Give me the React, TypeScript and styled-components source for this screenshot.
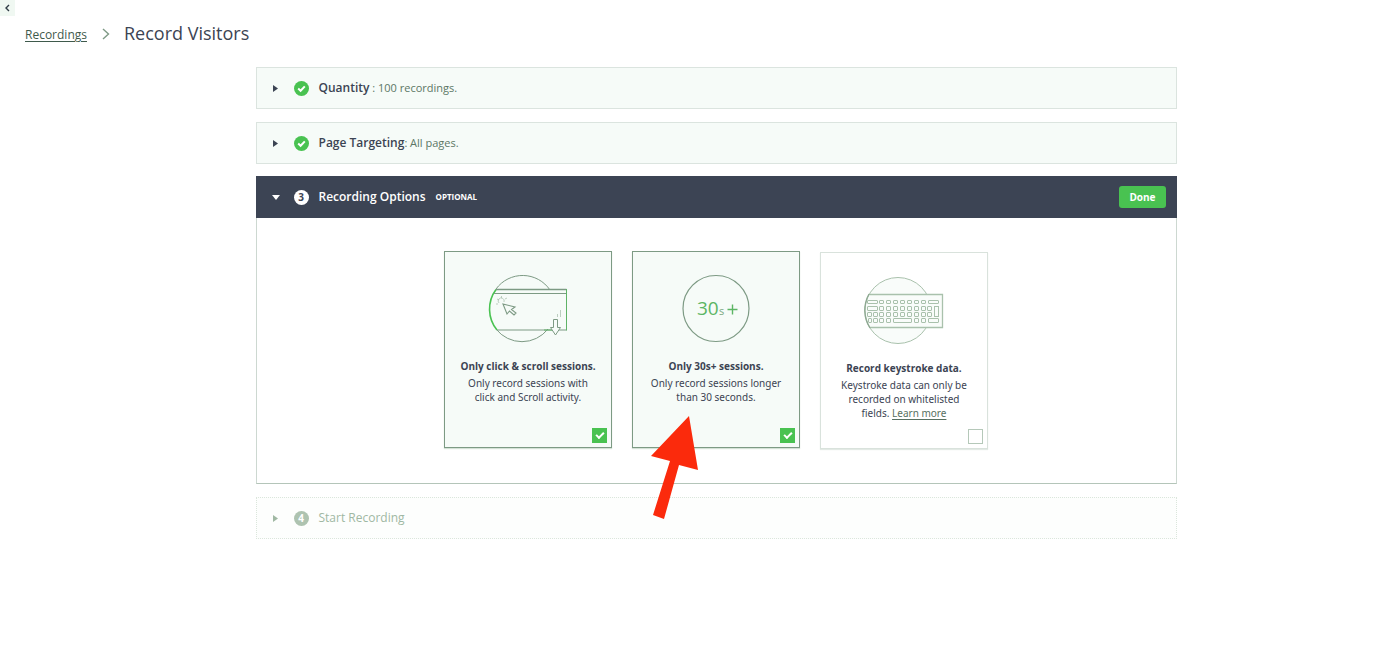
import React, { useState } from 'react';
import styled, { createGlobalStyle } from 'styled-components';

const GlobalStyle = createGlobalStyle`
  *, *::before, *::after { box-sizing: border-box; }
  body {
    margin: 0;
    background: #fff;
    color: #3c4453;
    font-family: 'Open Sans', 'Noto Sans', sans-serif;
    font-size: 12px;
  }
  h1, h2, h3, p { margin: 0; font-weight: inherit; }
  button { font-family: inherit; cursor: pointer; }
`;

const Page = styled.div`
  position: relative;
`;

const CollapseButton = styled.button`
  position: absolute;
  top: 0;
  left: 0;
  display: flex;
  align-items: center;
  justify-content: center;
  width: 15px;
  height: 16px;
  padding: 0;
  border: 0;
  background: #f0f8f2;
`;

const Breadcrumb = styled.nav`
  display: flex;
  align-items: center;
  padding: 20px 25px 0;
  height: 46px;
`;

const CrumbLink = styled.a`
  margin-top: 4px;
  color: #3f5a4c;
  font-size: 12px;
  line-height: 16px;
  text-underline-offset: 2px;
`;

const CrumbArrow = styled.svg`
  margin: 2px 14px 0 15px;
`;

const PageTitle = styled.h1`
  font-size: 18px;
  line-height: 26px;
  color: #3c4453;
`;

const Steps = styled.main`
  display: flex;
  flex-direction: column;
  gap: 13px;
  max-width: 953px;
  margin: 21px auto 0;
  padding-left: 32px;
`;

type StepState = 'complete' | 'active' | 'pending';

const Panel = styled.section<{ $state: StepState }>`
  border: 1px ${(p) => (p.$state === 'pending' ? 'dotted #dbe6dc' : 'solid #dbe4df')};
  background: ${(p) => (p.$state === 'active' ? '#fff' : p.$state === 'pending' ? '#fdfefd' : '#f6fbf8')};
  ${(p) => p.$state === 'active' && 'border-color: #cdd8d1; border-bottom-color: #b4c5b9; border-top: 0;'}
`;

const PanelHeader = styled.header<{ $active?: boolean }>`
  display: flex;
  align-items: center;
  height: ${(p) => (p.$active ? 42 : 40)}px;
  margin: ${(p) => (p.$active ? '-1px -1px 0' : '0')};
  padding: 0 ${(p) => (p.$active ? 11 : 10)}px 0 ${(p) => (p.$active ? 16 : 15)}px;
  background: ${(p) => (p.$active ? '#3c4454' : 'transparent')};
  color: ${(p) => (p.$active ? '#fff' : '#3c4453')};
`;

const Toggle = styled.button<{ $muted?: boolean }>`
  display: flex;
  align-items: center;
  padding: 0;
  border: 0;
  background: none;
  color: ${(p) => (p.$muted ? '#a0b8a3' : 'inherit')};
  font-size: 12px;
  line-height: 18px;
  text-align: left;
`;

const Caret = styled.svg`
  margin-right: 14px;
`;

const Badge = styled.span<{ $tone: 'light' | 'muted' }>`
  display: flex;
  align-items: center;
  justify-content: center;
  width: 15px;
  height: 15px;
  margin: 1px 10px 0 0;
  border-radius: 50%;
  background: ${(p) => (p.$tone === 'light' ? '#fff' : '#aec3b0')};
  color: ${(p) => (p.$tone === 'light' ? '#3c4454' : '#fff')};
  font-size: 10px;
  font-weight: 700;
  line-height: 15px;
`;

const CheckBadge = styled.svg`
  margin: 1px 10px 0 0;
`;

const StepTitle = styled.span<{ $weight: number }>`
  font-weight: ${(p) => p.$weight};
`;

const StepDetail = styled.span`
  color: #5c7765;
  font-size: 11px;
  white-space: pre;
`;

const OptionalTag = styled.span`
  margin-left: 10px;
  font-size: 8px;
  font-weight: 700;
`;

const DoneButton = styled.button`
  height: 22px;
  margin-left: auto;
  padding: 0 10px;
  border: 0;
  border-radius: 3px;
  background: #49c251;
  color: #fff;
  font-size: 10px;
  font-weight: 700;
  line-height: 22px;
`;

const Options = styled.div`
  display: flex;
  flex-wrap: wrap;
  align-items: flex-start;
  justify-content: center;
  gap: 20px;
  padding: 33px 20px 34px;
`;

const Card = styled.div<{ $checked: boolean }>`
  position: relative;
  display: flex;
  flex-direction: column;
  align-items: center;
  width: 168px;
  min-height: 197px;
  margin-top: ${(p) => (p.$checked ? 0 : 1)}px;
  padding: ${(p) => (p.$checked ? 22 : 23)}px 4px 4px;
  border: 1px solid ${(p) => (p.$checked ? '#7d9a84' : '#d9e2dc')};
  background: ${(p) => (p.$checked ? '#f6fbf8' : '#fff')};
  box-shadow: 0 1px 1px ${(p) => (p.$checked ? '#d4e2d7' : '#e3eae5')};
  font-size: 10px;
  text-align: center;
`;

const Art = styled.svg`
  display: block;
  margin-bottom: 13px;
`;

const CardTitle = styled.h3`
  font-size: 10px;
  font-weight: 700;
  line-height: 18px;
`;

const CardText = styled.p`
  width: 136px;
  padding-top: 1px;
  font-family: 'Noto Sans', 'Open Sans', sans-serif;
  line-height: 14px;
`;

const TextLink = styled.a`
  color: #587061;
  text-underline-offset: 2px;
`;

const CheckBox = styled.input`
  appearance: none;
  display: grid;
  place-content: center;
  width: 15px;
  height: 15px;
  margin: auto 0 0;
  align-self: flex-end;
  border: 1px solid #b5c8b9;
  background: #fff;
  cursor: pointer;

  &:checked {
    border-color: #49c251;
    background: #49c251;
  }
  &:checked::before {
    content: '';
    width: 8px;
    height: 5px;
    margin-top: -2px;
    border: solid #fff;
    border-width: 0 0 2px 2px;
    transform: rotate(-45deg);
  }
`;

const Pointer = styled.svg`
  position: absolute;
  top: 164px;
  left: 17px;
  z-index: 1;
  pointer-events: none;
`;

const CaretIcon = ({ open = false }: { open?: boolean }) => (
  <Caret width="8" height="8" viewBox="0 0 8 8" fill="currentColor" aria-hidden="true">
    <path d={open ? 'M0 2H8L4 7Z' : 'M1 1L6 4.5L1 8Z'} />
  </Caret>
);

const DoneMark = () => (
  <CheckBadge width="15" height="15" viewBox="0 0 15 15" aria-hidden="true">
    <circle cx="7.5" cy="7.5" r="7.5" fill="#49c251" />
    <path d="M4.2 7.6L6.6 9.8L10.8 5.4" fill="none" stroke="#fff" strokeWidth="2" />
  </CheckBadge>
);

const ClickScrollArt = () => (
  <Art width="84" height="70" viewBox="0 0 84 70" fill="none" stroke="#7d9a84" aria-hidden="true">
    <path d="M64 16A33 33 0 0 0 10 15M10 55A33 33 0 0 0 62 55" />
    <path d="M10 15.500A33 33 0 0 0 11 56" stroke="#49c251" strokeWidth="1.6" />
    <path d="M10 15.500H80.500" strokeWidth="1.500" />
    <path d="M8 19.500H80.500M11 56H66M73 56H80.500" />
    <path d="M80.500 15V56.500M58 56H66" stroke="#5fb367" />
    <path d="M17 30L29 33L25.500 35.500L30 39L28 41L23.500 37L21 40Z" strokeWidth="1.100" />
    <path d="M13 29A3 3 0 1 1 18 28M10 30H12M11 25L13 26M15.500 22V24M19 25L21 24" strokeWidth=".7" stroke="#a4baa8" />
    <path d="M67.500 45.500H71.500V53.500H74.500L69.500 61L64.500 53.500H67.500Z" fill="#f6fbf8" />
    <path d="M71.500 40V43M74.500 36V43" strokeWidth=".7" stroke="#a4baa8" />
  </Art>
);

const ThirtySecondsArt = () => (
  <Art width="84" height="70" viewBox="0 0 84 70" aria-hidden="true">
    <circle cx="42" cy="34.500" r="33" fill="none" stroke="#7d9a84" strokeWidth="1.200" />
    <text x="23" y="41" fontSize="19" fill="#5cb564">30</text>
    <text x="45" y="41" fontSize="11" fill="#7aa881">s</text>
    <path d="M53.500 35.500H63.500M58.500 30.500V40.500" stroke="#5cb564" strokeWidth="1.400" />
  </Art>
);

const keyRows: number[][][] = [
  [[8, 10], [20, 4], [27, 4], [34, 4], [41, 4], [48, 4], [55, 4], [62, 4], [69, 10]],
  [[8, 10], [20, 4], [27, 4], [34, 4], [41, 4], [48, 4], [55, 4], [62, 4], [68, 4]],
  [[8, 4], [14, 4], [20, 4], [27, 4], [34, 4], [41, 4], [48, 4], [55, 4], [62, 4], [68, 4]],
  [[9, 3], [14, 4], [20, 4], [27, 4], [34, 18], [55, 4], [62, 4], [69, 10]],
];

const KeyboardArt = () => (
  <Art width="84" height="70" viewBox="3 0 84 70" fill="none" stroke="#a9c1ac" aria-hidden="true">
    <circle cx="39" cy="34.500" r="33" fill="#f9fcfa" />
    <path d="M10 18.500H84V51.500H11" fill="#f9fcfa" stroke="none" />
    <path d="M10 18.500H83.500V51.500H11" strokeWidth="1.300" />
    <path d="M10 18A33 33 0 0 0 11 52" stroke="#8da891" strokeWidth="1.300" />
    {keyRows.map((row, r) =>
      row.map(([x, w]) => (
        <rect key={`${r}-${x}`} x={x + 0.5} y={24.5 + r * 6} width={w} height={r === 0 ? 3 : 4} rx=".5" />
      )),
    )}
    <rect x="75.500" y="30.500" width="4" height="10" />
  </Art>
);

type OptionProps = {
  id: string;
  title: string;
  initial?: boolean;
  art: React.ReactNode;
  overlay?: React.ReactNode;
  children: React.ReactNode;
};

function OptionCard({ id, title, initial = false, art, overlay, children }: OptionProps) {
  const [checked, setChecked] = useState(initial);
  return (
    <Card $checked={checked}>
      {art}
      <CardTitle>
        <label htmlFor={id}>{title}</label>
      </CardTitle>
      <CardText>{children}</CardText>
      <CheckBox id={id} type="checkbox" checked={checked} onChange={(e) => setChecked(e.target.checked)} />
      {overlay}
    </Card>
  );
}

function CompleteStep({ title, detail }: { title: string; detail: string }) {
  return (
    <Panel $state="complete">
      <PanelHeader>
        <h2>
          <Toggle type="button" aria-expanded="false">
            <CaretIcon />
            <DoneMark />
            <StepTitle $weight={600}>{title}</StepTitle>
            <StepDetail>{detail}</StepDetail>
          </Toggle>
        </h2>
      </PanelHeader>
    </Panel>
  );
}

export default function App() {
  return (
    <Page>
      <GlobalStyle />
      <CollapseButton type="button" aria-label="Collapse menu">
        <svg width="5" height="8" viewBox="0 0 5 8" fill="none" stroke="#2f3b45" strokeWidth="1.400">
          <path d="M4 1L1 4L4 7" />
        </svg>
      </CollapseButton>
      <Breadcrumb aria-label="Breadcrumb">
        <CrumbLink href="#recordings">Recordings</CrumbLink>
        <CrumbArrow width="8" height="12" viewBox="0 0 8 12" fill="none" stroke="#7f9a86" strokeWidth="1.400" aria-hidden="true">
          <path d="M1 1L6.500 6L1 11" />
        </CrumbArrow>
        <PageTitle>Record Visitors</PageTitle>
      </Breadcrumb>
      <Steps>
        <CompleteStep title="Quantity" detail=" : 100 recordings." />
        <CompleteStep title="Page Targeting" detail=": All pages." />
        <Panel $state="active">
          <PanelHeader $active>
            <h2>
              <Toggle type="button" aria-expanded="true">
                <CaretIcon open />
                <Badge $tone="light">3</Badge>
                <StepTitle $weight={600}>Recording Options</StepTitle>
                <OptionalTag>OPTIONAL</OptionalTag>
              </Toggle>
            </h2>
            <DoneButton type="button">Done</DoneButton>
          </PanelHeader>
          <Options>
            <OptionCard id="click-scroll" title="Only click & scroll sessions." initial art={<ClickScrollArt />}>
              Only record sessions with click and Scroll activity.
            </OptionCard>
            <OptionCard
              id="thirty-seconds"
              title="Only 30s+ sessions."
              initial
              art={<ThirtySecondsArt />}
              overlay={
                <Pointer width="50" height="104" viewBox="0 0 50 104" aria-hidden="true">
                  <path d="M39 0L48 54L29 49L14 103L3 99L20 45L1 40Z" fill="#fb2a0c" />
                </Pointer>
              }
            >
              Only record sessions longer than 30 seconds.
            </OptionCard>
            <OptionCard id="keystrokes" title="Record keystroke data." art={<KeyboardArt />}>
              Keystroke data can only be recorded on whitelisted fields. <TextLink href="#learn-more">Learn more</TextLink>
            </OptionCard>
          </Options>
        </Panel>
        <Panel $state="pending">
          <PanelHeader>
            <h2>
              <Toggle type="button" aria-expanded="false" $muted>
                <CaretIcon />
                <Badge $tone="muted">4</Badge>
                <StepTitle $weight={400}>Start Recording</StepTitle>
              </Toggle>
            </h2>
          </PanelHeader>
        </Panel>
      </Steps>
    </Page>
  );
}
